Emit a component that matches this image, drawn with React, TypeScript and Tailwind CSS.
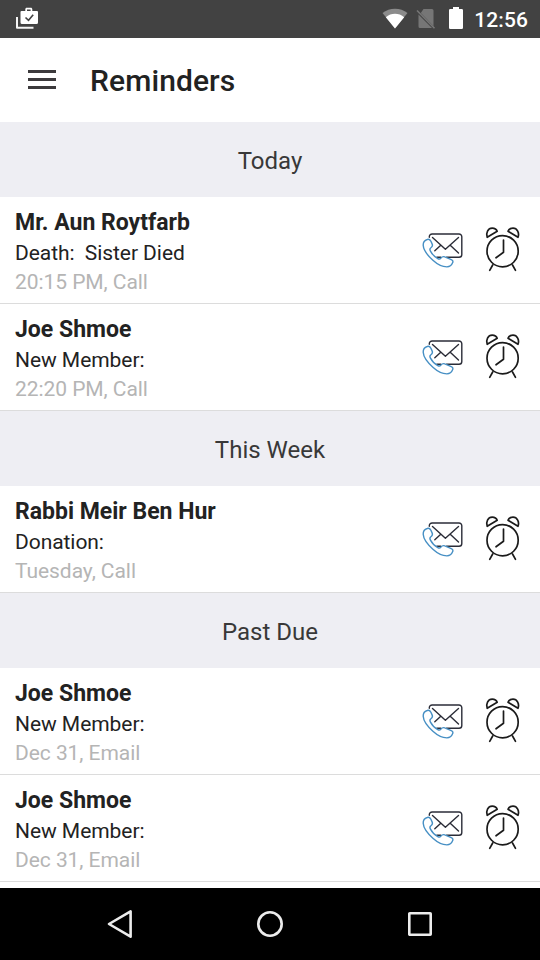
import { Fragment } from "react";

interface Reminder {
  name: string;
  detail: string;
  when: string;
}

interface Section {
  title: string;
  items: Reminder[];
}

const sections: Section[] = [
  {
    title: "Today",
    items: [
      { name: "Mr. Aun Roytfarb", detail: "Death:  Sister Died", when: "20:15 PM, Call" },
      { name: "Joe Shmoe", detail: "New Member:", when: "22:20 PM, Call" },
    ],
  },
  {
    title: "This Week",
    items: [{ name: "Rabbi Meir Ben Hur", detail: "Donation:", when: "Tuesday, Call" }],
  },
  {
    title: "Past Due",
    items: [
      { name: "Joe Shmoe", detail: "New Member:", when: "Dec 31, Email" },
      { name: "Joe Shmoe", detail: "New Member:", when: "Dec 31, Email" },
    ],
  },
];

function ContactIcon() {
  return (
    <svg width="46" height="44" viewBox="0 0 46 44" fill="none" strokeLinecap="round" strokeLinejoin="round">
      <g stroke="#2b2d38" strokeWidth="1.4">
        <path d="M9.3 9.3V8.800a2.800 2.800 0 0 1 2.800-2.800h26.900a2.800 2.800 0 0 1 2.800 2.800v17.700a2.800 2.800 0 0 1-2.800 2.800H26.500M16.800 29.300h4" />
        <path d="M12.500 9.500l12.900 11.800L38.500 9.500M30.500 17.500l8 7.500M20.500 17.500l-5.700 5.300" />
      </g>
      <path
        d="M7.200 11.500c1.600-.6 2.900.2 3.700 1.800l1.300 2.800c.7 1.500.1 2.600-1.300 3.700-1.100.8-1.300 1.700-.6 3 1.800 3.400 4.300 6.100 7.500 7.800 1.300.7 2.300.5 3.100-.5 1.100-1.400 2.300-1.900 3.900-1.200l5.900 2.400c1.900.8 2.600 1.900 2 3.300-.9 2.300-2.900 4.300-5.800 4.300-4.400 0-9.200-2.200-14-6.600C7.700 27.600 3.500 22.300 3.200 17.300c-.1-2.600 1.400-5 4-5.800z"
        stroke="#468fc4"
        strokeWidth="1.4"
      />
    </svg>
  );
}

function AlarmIcon() {
  return (
    <svg width="40" height="48" viewBox="0 0 40 48" fill="none" stroke="#1b1b1b" strokeWidth="1.7" strokeLinecap="round" strokeLinejoin="round">
      <circle cx="20.6" cy="27.2" r="15.600" />
      <path d="M21.500 16v12.300l-7.500 5.500" />
      <path d="M10.700 41l-3 5.300M30.500 41l3 5.300" />
      <path d="M5.200 13.300C3.600 8.900 6 4.100 10.200 4.100c2.300 0 4.200 1.100 5 3.200z" />
      <path d="M36 13.300c1.600-4.400-.8-9.200-5-9.200-2.300 0-4.200 1.100-5 3.200z" />
    </svg>
  );
}

function StatusBar() {
  return (
    <div className="flex h-[38px] items-center justify-between bg-[#424242] pr-3 pl-4">
      <svg width="22" height="22" viewBox="0 0 22 22" className="mb-0.5">
        <path d="M1 10v10.800h16.500" fill="none" stroke="#f5f5f5" strokeWidth="2" strokeLinejoin="round" />
        <path
          fillRule="evenodd"
          d="M9.300 4V2.300c0-.9.600-1.500 1.500-1.500h4c.9 0 1.500.6 1.500 1.500V4H21a1 1 0 0 1 1 1v10.500a1.500 1.500 0 0 1-1.500 1.500H6a1.500 1.500 0 0 1-1.500-1.500V5a1 1 0 0 1 1-1zM11 4h3.600V2.500H11z"
          fill="#fff"
        />
        <path d="M9.500 10.500l3 2.800 4.700-5.500" fill="none" stroke="#424242" strokeWidth="1.600" />
      </svg>
      <div className="flex items-center">
        <svg width="26" height="22" viewBox="0 0 26 22">
          <path d="M.5 5C7.500-.8 18.500-.8 25.500 5L13 20.500z" fill="#8b8b8b" />
          <path d="M3.800 9.200c5.300-4.600 13.100-4.600 18.400 0L13 20.500z" fill="#fff" />
        </svg>
        <svg width="20" height="22" viewBox="0 0 20 22" className="ml-2">
          <path d="M7.500 1H16a1.500 1.500 0 0 1 1.500 1.500v15.800L4.800 5zM2.500 6.500L16 20H4a1.500 1.500 0 0 1-1.500-1.500z" fill="#767676" />
          <path d="M1 2.500L18.500 20.300" stroke="#767676" strokeWidth="1.600" />
        </svg>
        <svg width="14" height="22" viewBox="0 0 14 22" className="mb-0.5 ml-[13px]">
          <path d="M4 2V0h6v2h2.700A1.300 1.300 0 0 1 14 3.300v17.400a1.300 1.300 0 0 1-1.300 1.300H1.300A1.300 1.300 0 0 1 0 20.700V3.300A1.300 1.300 0 0 1 1.300 2z" fill="#fff" />
        </svg>
        <span className="ml-[11px] pt-0.5 text-[21px] leading-none font-medium tracking-[0.1px] text-white">12:56</span>
      </div>
    </div>
  );
}

function ReminderRow({ item }: { item: Reminder }) {
  return (
    <li className="flex h-[107px] border-b border-[#dcdcdc] pl-[15px]">
      <div className="flex-1 pt-[10px] whitespace-pre">
        <div className="text-[23px] leading-[31px] font-bold text-[#222]">{item.name}</div>
        <div className="text-[21px] leading-[30px] tracking-[-0.06px] text-[#222]">{item.detail}</div>
        <div className="text-[21px] leading-[28px] tracking-[-0.06px] text-[#b5b5b5]">{item.when}</div>
      </div>
      <div className="flex items-start gap-4 pt-[27px] pr-[18px]">
        <div className="pt-1">
          <ContactIcon />
        </div>
        <AlarmIcon />
      </div>
    </li>
  );
}

function NavBar() {
  return (
    <nav className="flex h-[72px] shrink-0 items-center justify-center gap-[120px] bg-black">
      <svg width="30" height="30" viewBox="0 0 30 30" fill="none" stroke="#ececec" strokeWidth="2.600" strokeLinejoin="round">
        <path d="M25.600 2.300v25.400L4 15z" />
      </svg>
      <svg width="30" height="30" viewBox="0 0 30 30" fill="none" stroke="#ececec" strokeWidth="2.600">
        <circle cx="15" cy="15" r="11.700" />
      </svg>
      <svg width="30" height="30" viewBox="0 0 30 30" fill="none" stroke="#ececec" strokeWidth="2.600" strokeLinejoin="round">
        <rect x="4.300" y="4.300" width="21.400" height="21.400" rx=".5" />
      </svg>
    </nav>
  );
}

export default function App() {
  return (
    <div className="flex h-[960px] w-[540px] flex-col overflow-hidden bg-white font-['Roboto',sans-serif]">
      <StatusBar />
      <header className="flex h-[84px] items-center pl-7">
        <div className="mb-px flex flex-col gap-[5px]">
          <span className="h-[3px] w-7 bg-[#3c3a3c]" />
          <span className="h-[3px] w-7 bg-[#3c3a3c]" />
          <span className="h-[3px] w-7 bg-[#3c3a3c]" />
        </div>
        <h1 className="mt-0.5 ml-[34px] text-[30px] leading-none font-medium tracking-[0.1px] text-[#222]">Reminders</h1>
      </header>
      <main className="flex-1">
        {sections.map((section) => (
          <Fragment key={section.title}>
            <h2 className="flex h-[75px] items-center justify-center bg-[#eeeef3] pt-[3px] text-2xl text-[#383838]">
              {section.title}
            </h2>
            <ul>
              {section.items.map((item, i) => (
                <ReminderRow key={i} item={item} />
              ))}
            </ul>
          </Fragment>
        ))}
      </main>
      <NavBar />
    </div>
  );
}
